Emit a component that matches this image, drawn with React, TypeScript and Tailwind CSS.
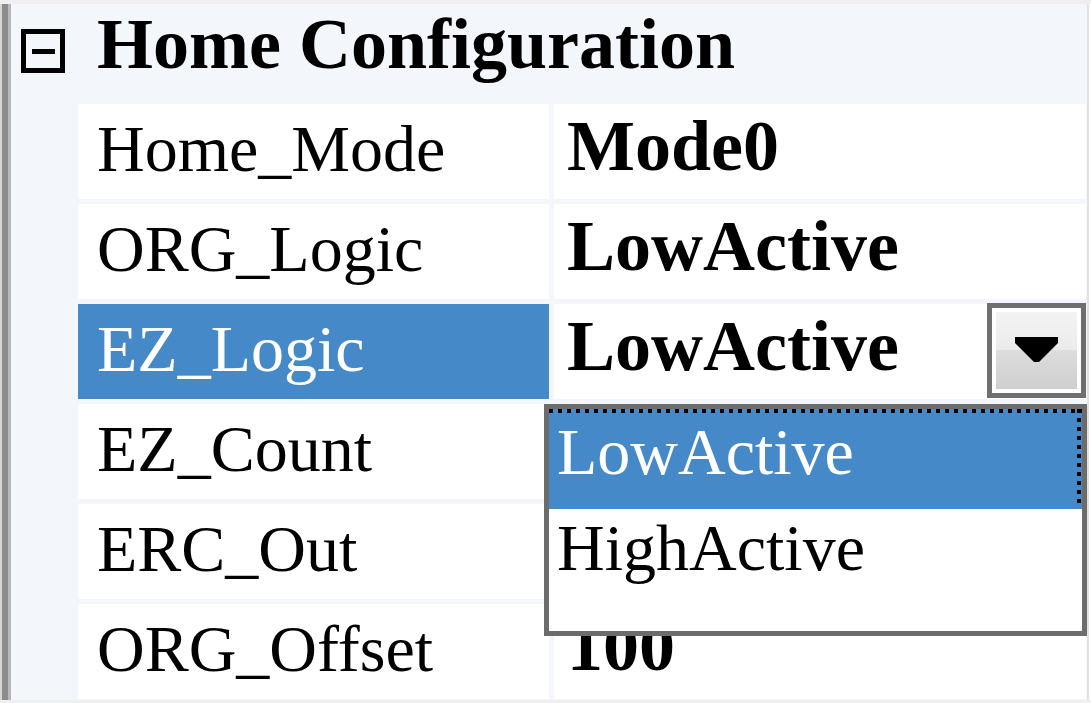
import React from "react";

type Row = { name: string; value: string; selected?: boolean };

const rows: Row[] = [
  { name: "Home_Mode", value: "Mode0" },
  { name: "ORG_Logic", value: "LowActive" },
  { name: "EZ_Logic", value: "LowActive", selected: true },
  { name: "EZ_Count", value: "" },
  { name: "ERC_Out", value: "" },
  { name: "ORG_Offset", value: "100" },
];

function DropButton() {
  return (
    <div className="absolute right-0 top-[-1px] w-[99px] h-[95px] border-[5px] border-[#6f6f6f] bg-white p-[4px]">
      <div className="w-full h-full flex items-center justify-center bg-[linear-gradient(to_bottom,#f3f3f3_0%,#ebebeb_50%,#dddddd_50%,#cfcfcf_100%)]">
        <svg width="43" height="25" viewBox="0 0 43 25" className="mt-[-3px]">
          <polygon points="0,0 43,0 43,6 24,25 19,25 0,6" fill="#000" />
        </svg>
      </div>
    </div>
  );
}

export default function App() {
  return (
    <div className="relative w-[1091px] h-[703px] overflow-hidden bg-[#efefef] font-['Liberation_Serif',serif] text-black">
      <div className="h-[4px]" />
      <div className="flex h-[696px]">
        <div className="flex w-[11px]">
          <div className="w-[2px] bg-[#d6d6d6]" />
          <div className="w-[6px] bg-[#8c8c8c]" />
          <div className="w-[3px] bg-[#b8b8b8]" />
        </div>
        <div className="w-[1076px] bg-[#f3f6fb] pr-[1px]">
          <div className="h-[100px] flex items-start">
            <div className="ml-[10px] mt-[25px] w-[44px] h-[44px] border-[5px] border-black flex items-center justify-center">
              <div className="w-[23px] h-[5px] bg-black" />
            </div>
            <div className="ml-[32px] pt-[4px] text-[72px] leading-[72px] font-bold whitespace-nowrap">
              Home Configuration
            </div>
          </div>
          {rows.map((r, i) => (
            <div
              key={r.name}
              className={`flex h-[95px] ${i === rows.length - 1 ? "mb-[1px]" : "mb-[5px]"}`}
            >
              <div
                className={`ml-[67px] w-[471px] pl-[19px] pt-[12px] text-[66px] leading-[66px] whitespace-nowrap ${
                  r.selected ? "bg-[#4589c8] text-white" : "bg-white text-black"
                }`}
              >
                {r.name}
              </div>
              <div className="relative ml-[5px] w-[532px] bg-white pl-[13px] pt-[6px] text-[72px] leading-[72px] font-bold whitespace-nowrap">
                {r.value}
                {r.selected && <DropButton />}
              </div>
            </div>
          ))}
        </div>
        <div className="w-[2px] bg-[#e2e2e2]" />
        <div className="w-[2px] bg-white" />
      </div>

      <div className="absolute left-[544px] top-[404px] w-[543px] h-[232px] border-[5px] border-[#6c6c6c] bg-white">
        <div className="relative w-[533px] h-[100px] bg-[#4589c8] text-white pl-[8px] pt-[10px] text-[66px] leading-[66px] whitespace-nowrap">
          LowActive
          <svg className="absolute left-0 top-0" width="533" height="100" viewBox="0 0 533 100">
            <line x1="0" y1="2" x2="533" y2="2" stroke="#000" strokeWidth="4" strokeDasharray="4 5" />
            <line x1="530" y1="0" x2="530" y2="95" stroke="#000" strokeWidth="4" strokeDasharray="4 5" />
          </svg>
        </div>
        <div className="h-[92px] pl-[8px] pt-[6px] text-[66px] leading-[66px] whitespace-nowrap">
          HighActive
        </div>
      </div>
    </div>
  );
}
